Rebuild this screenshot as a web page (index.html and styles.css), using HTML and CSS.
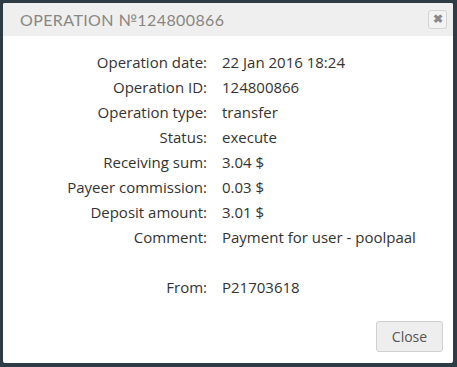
FILE: index.html
```html
<!DOCTYPE html>
<html lang="en">
<head>
    <meta charset="UTF-8">
    <title>Operation</title>
    <link rel="stylesheet" href="styles.css">
</head>
<body>
    <div class="modal">
        <div class="modal-header">
            <h2>Operation №124800866</h2>
            <button class="close-x">&#10006;</button>
        </div>
        <div class="modal-body">
            <table class="details">
                <tr><td class="label">Operation date:</td><td>22 Jan 2016 18:24</td></tr>
                <tr><td class="label">Operation ID:</td><td>124800866</td></tr>
                <tr><td class="label">Operation type:</td><td>transfer</td></tr>
                <tr><td class="label">Status:</td><td>execute</td></tr>
                <tr><td class="label">Receiving sum:</td><td>3.04 $</td></tr>
                <tr><td class="label">Payeer commission:</td><td>0.03 $</td></tr>
                <tr><td class="label">Deposit amount:</td><td>3.01 $</td></tr>
                <tr><td class="label">Comment:</td><td>Payment for user - poolpaal</td></tr>
                <tr><td class="label">&nbsp;</td><td></td></tr>
                <tr><td class="label">From:</td><td>P21703618</td></tr>
            </table>
        </div>
        <div class="modal-footer">
            <button class="btn">Close</button>
        </div>
    </div>
</body>
</html>
```

FILE: styles.css
```css
body {
    margin: 0;
    background-color: #2e3d45;
    font-family: "Open Sans", sans-serif;
    height: 367px;
}
.modal {
    margin: 3px 4px 0 3px;
    height: 360px;
    background: white;
    border-radius: 2px;
    display: flex;
    flex-direction: column;
    overflow: hidden;
}
.modal-header {
    background-color: #efefef;
    height: 33px;
    display: flex;
    align-items: center;
    justify-content: space-between;
    padding: 0 6px 0 17px;
}
.modal-header h2 {
    margin: 0;
    font-family: "Lato", sans-serif;
    font-weight: 400;
    font-size: 16px;
    letter-spacing: 0.4px;
    color: #8a8682;
    text-transform: uppercase;
}
.close-x {
    width: 19px;
    height: 19px;
    padding: 0;
    border: 1px solid #d4d4d4;
    border-radius: 3px;
    background: #f3f3f3;
    color: #8a8a8a;
    font-size: 12px;
    font-weight: bold;
    line-height: 17px;
}
.modal-body {
    flex: 1;
    padding: 13px 0 0 0;
}
.details {
    border-collapse: collapse;
    font-size: 15px;
    color: #333;
}
.details td {
    height: 25px;
    padding: 0;
}
.details .label {
    width: 204px;
    text-align: right;
    padding-right: 15px;
}
.modal-footer {
    display: flex;
    justify-content: flex-end;
    padding: 0 10px 11px 0;
}
.btn {
    width: 67px;
    height: 31px;
    border: 1px solid #d0d0d0;
    border-radius: 3px;
    background: #eeeeee;
    color: #555;
    font-family: "Open Sans", sans-serif;
    font-size: 14px;
}
```
